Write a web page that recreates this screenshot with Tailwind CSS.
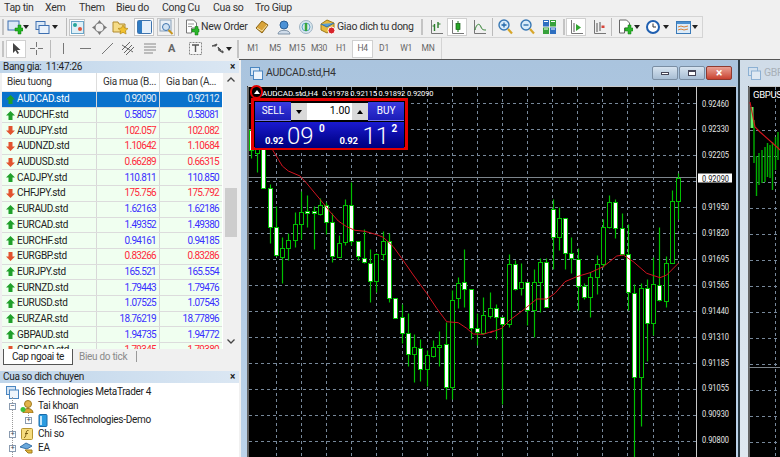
<!DOCTYPE html>
<html lang="vi">
<head>
    <meta charset="UTF-8">
    <title>MetaTrader 4</title>
    <script src="https://cdn.jsdelivr.net/npm/@tailwindcss/browser@4"></script>
</head>
<body class="w-[780px] h-[457px] overflow-hidden bg-[#f0f0f0] text-[#222] text-[10px] tracking-[-0.3px] leading-none font-['Roboto',sans-serif]">

    <!-- Menu -->
    <nav class="h-[16px] flex items-center text-[10.5px] text-[#333]">
        <span class="ml-[4px] w-[41px]">Tap tin</span>
        <span class="w-[34px]">Xem</span>
        <span class="w-[37px]">Them</span>
        <span class="w-[46px]">Bieu do</span>
        <span class="w-[51px]">Cong Cu</span>
        <span class="w-[42px]">Cua so</span>
        <span>Tro Giup</span>
    </nav>

    <!-- Toolbar 1 -->
    <div class="h-[22px] w-[703px] flex items-center border-y border-r border-[#d4d4d4] text-[10.5px] text-[#333]">
        <i class="ml-[2px] w-[2px] h-[16px] bg-[#c4c4c4]"></i>
        <svg class="ml-[3px]" width="16" height="16" viewBox="0 0 16 16"><rect x="1" y="2" width="11" height="9" fill="#dbe9f7" stroke="#3d6fb0"/><path d="M8 9h3V6h3v3h2v3h-2v3h-3v-3H8z" fill="#22b522" stroke="#0b7a0b" stroke-width=".5"/></svg>
        <svg width="6" height="4" viewBox="0 0 6 4"><path d="M0 0h6L3 4z" fill="#222"/></svg>
        <svg class="ml-[6px]" width="15" height="15" viewBox="0 0 15 15"><rect x="1" y="1.500" width="9" height="8" fill="#dbe9f7" stroke="#3d6fb0"/><rect x="4" y="5.500" width="10" height="8" fill="#eaf2fb" stroke="#3d6fb0"/></svg>
        <svg class="ml-[2px]" width="6" height="4" viewBox="0 0 6 4"><path d="M0 0h6L3 4z" fill="#222"/></svg>
        <i class="ml-[8px] w-[1px] h-[18px] bg-[#bbb]"></i>
        <span class="ml-[2px] w-[16px] h-[17px] flex items-center justify-center bg-white border border-[#c6c6c6]"><svg width="13" height="13" viewBox="0 0 13 13"><rect x=".5" y=".5" width="12" height="12" fill="#dff0f7" stroke="#6aa5c9"/><circle cx="4" cy="4" r="2" fill="#26a69a"/><circle cx="9" cy="8" r="2" fill="#e0533d"/></svg></span>
        <svg class="ml-[7px]" width="15" height="15" viewBox="0 0 15 15"><circle cx="7.500" cy="7.500" r="4.500" fill="none" stroke="#777" stroke-width="1.200"/><path d="M7.500 0l2 3h-4zM7.500 15l2-3h-4zM0 7.500l3-2v4zM15 7.500l-3-2v4z" fill="#777"/></svg>
        <svg class="ml-[5px]" width="17" height="16" viewBox="0 0 17 16"><path d="M1 3h5l1 2h6v8H1z" fill="#f5dc88" stroke="#b08a2e"/><path d="M11 6l1.500 3 3.500.5-2.500 2.300.6 3.200-3.100-1.600-3 1.600.6-3.200L6 9.500 9.500 9z" fill="#f2c230" stroke="#a97f12" stroke-width=".6"/></svg>
        <span class="ml-[5px] w-[20px] h-[18px] flex items-center justify-center bg-white border border-[#c6c6c6]"><svg width="15" height="14" viewBox="0 0 15 14"><rect x=".5" y=".5" width="14" height="13" rx="1" fill="#e6f0fa" stroke="#3f74ad"/><rect x="1" y="1" width="4" height="12" fill="#2f7cc4"/></svg></span>
        <span class="ml-[3px] w-[18px] h-[18px] flex items-center justify-center border border-[#c6c6c6]"><svg width="15" height="16" viewBox="0 0 15 16"><rect x="1" y="1" width="11" height="11" fill="#e9f0f7" stroke="#88a0b8"/><circle cx="7" cy="8" r="3.500" fill="#cfe2f3" stroke="#3f74ad"/><path d="M9.500 11l4 4" stroke="#c8961e" stroke-width="2"/></svg></span>
        <i class="ml-[3px] w-[1px] h-[18px] bg-[#bbb]"></i>
        <svg class="ml-[6px]" width="15" height="17" viewBox="0 0 15 17"><path d="M1.500 1h7l3 3v5h-5v5h-5z" fill="#fff" stroke="#777"/><path d="M3 5h6M3 7.500h4" stroke="#999"/><path d="M8 9h3V6.500h3V9h1v3h-1v3h-3v-3H8z" transform="translate(-1 1)" fill="#2cb52c" stroke="#0b7a0b" stroke-width=".5"/></svg>
        <span class="ml-[1px] w-[54px] whitespace-nowrap">New Order</span>
        <svg width="14" height="14" viewBox="0 0 14 14"><path d="M1 8l6-7 6 4-6 8z" fill="#d9a43a" stroke="#8b6414"/><path d="M2 8l5 3 5-6" fill="none" stroke="#f5e2a8"/></svg>
        <svg class="ml-[8px]" width="14" height="15" viewBox="0 0 14 15"><circle cx="7" cy="5" r="4" fill="#4b91d6" stroke="#2a5f97"/><path d="M1 14c0-5 12-5 12 0z" fill="#cfdcea" stroke="#7f93a8"/></svg>
        <svg class="ml-[8px]" width="14" height="14" viewBox="0 0 14 14"><circle cx="7" cy="7" r="6.500" fill="#d9e6ee" stroke="#9fb3c2"/><circle cx="7" cy="7" r="4" fill="none" stroke="#5aa7c9"/><path d="M7 3v8" stroke="#3aa63a" stroke-width="2.500"/></svg>
        <svg class="ml-[7px]" width="16" height="16" viewBox="0 0 16 16"><path d="M1 5l6-4 7 3v6l-7 4-6-3z" fill="#e6b93f" stroke="#9c7a18"/><path d="M1 5l6 3 7-4" fill="#5aa0d8" stroke="#2f6ea6"/><circle cx="11.500" cy="11.500" r="3.500" fill="#d8232a" stroke="#fff"/></svg>
        <span class="ml-[1px] w-[76px] whitespace-nowrap">Giao dich tu dong</span>
        <i class="ml-[8px] w-[2px] h-[16px] bg-[#c4c4c4]"></i>
        <svg class="ml-[7px]" width="13" height="15" viewBox="0 0 13 15"><path d="M1.500 0v13.500H13" fill="none" stroke="#777"/><path d="M4.500 4v7M8 2v6" stroke="#2a7d2a" stroke-width="1.400"/><path d="M2.500 6h2M8 4h2.500" stroke="#2a7d2a"/></svg>
        <span class="ml-[4px] w-[20px] h-[18px] flex items-center justify-center bg-white border border-[#d0d0d0]"><svg width="13" height="15" viewBox="0 0 13 15"><path d="M1.500 0v13.500H13" fill="none" stroke="#777"/><path d="M7 1v11" stroke="#1c7a1c"/><rect x="5" y="3.500" width="4" height="6" fill="#26a626" stroke="#145f14" stroke-width=".7"/></svg></span>
        <svg class="ml-[6px]" width="13" height="15" viewBox="0 0 13 15"><path d="M1.500 0v13.500H13" fill="none" stroke="#777"/><path d="M2 10c2-8 5-6 6-3s3 3 5 3" fill="none" stroke="#2a7d2a"/></svg>
        <i class="ml-[6px] w-[1px] h-[18px] bg-[#bbb]"></i>
        <svg class="ml-[5px]" width="15" height="16" viewBox="0 0 15 16"><circle cx="6" cy="6" r="5" fill="#d7ebf9" stroke="#3878b4" stroke-width="1.400"/><path d="M3.500 6h5M6 3.500v5" stroke="#2167a8" stroke-width="1.300"/><path d="M10 10l4 4.500" stroke="#d7a62a" stroke-width="2.200"/></svg>
        <svg class="ml-[7px]" width="15" height="16" viewBox="0 0 15 16"><circle cx="6" cy="6" r="5" fill="#d7ebf9" stroke="#3878b4" stroke-width="1.400"/><path d="M3.500 6h5" stroke="#2167a8" stroke-width="1.300"/><path d="M10 10l4 4.500" stroke="#d7a62a" stroke-width="2.200"/></svg>
        <svg class="ml-[8px]" width="13" height="14" viewBox="0 0 13 14"><rect width="6" height="6.500" fill="#2e6fc0"/><rect x="7" width="6" height="6.500" fill="#37a13a"/><rect y="7.500" width="6" height="6.500" fill="#37a13a"/><rect x="7" y="7.500" width="6" height="6.500" fill="#2e6fc0"/><path d="M1 1.500h4M8 1.500h4M1 9h4M8 9h4" stroke="#fff"/></svg>
        <i class="ml-[7px] w-[2px] h-[16px] bg-[#c4c4c4]"></i>
        <span class="ml-[1px] w-[20px] h-[18px] flex items-center justify-center bg-white border border-[#d0d0d0]"><svg width="13" height="15" viewBox="0 0 13 15"><path d="M1.500 0v13.500H13" fill="none" stroke="#777"/><path d="M4 3v9" stroke="#555"/><path d="M6 4l5 3.500L6 11z" fill="#2fa52f"/></svg></span>
        <svg class="ml-[7px]" width="13" height="15" viewBox="0 0 13 15"><path d="M1.500 0v13.500H13" fill="none" stroke="#777"/><path d="M4 3v9M7 2v9" stroke="#555"/><path d="M8.500 5.500h3v2.500h-3z" fill="#d7453a"/></svg>
        <i class="ml-[5px] w-[1px] h-[18px] bg-[#bbb]"></i>
        <svg class="ml-[6px]" width="15" height="16" viewBox="0 0 15 16"><path d="M1.500 1h7l3 3v5h-5v5h-5z" fill="#fff" stroke="#666"/><path d="M7 9h3V6h3v3h2v3h-2v3h-3v-3H7z" fill="#2cb52c" stroke="#0b7a0b" stroke-width=".5"/></svg>
        <svg class="ml-[1px]" width="6" height="4" viewBox="0 0 6 4"><path d="M0 0h6L3 4z" fill="#222"/></svg>
        <svg class="ml-[6px]" width="14" height="14" viewBox="0 0 14 14"><circle cx="7" cy="7" r="6" fill="#fff" stroke="#1f5fb0" stroke-width="2"/><path d="M7 3.500V7h3" fill="none" stroke="#333"/></svg>
        <svg class="ml-[3px]" width="6" height="4" viewBox="0 0 6 4"><path d="M0 0h6L3 4z" fill="#222"/></svg>
        <svg class="ml-[7px]" width="15" height="13" viewBox="0 0 15 13"><rect x=".5" y=".5" width="14" height="12" fill="#dcebf8" stroke="#3a7ab8"/><rect x="1" y="1" width="13" height="2" fill="#4b8fcf"/><path d="M2 6l3-1 3 1 4-1M2 9l3-1 3 1 4-1" fill="none" stroke="#d8823a"/></svg>
        <svg class="ml-[1px]" width="6" height="4" viewBox="0 0 6 4"><path d="M0 0h6L3 4z" fill="#222"/></svg>
    </div>

    <!-- Toolbar 2 -->
    <div class="h-[21px] w-[442px] flex items-center border-r border-[#d4d4d4] text-[8.5px] text-[#666]">
        <i class="ml-[2px] w-[2px] h-[16px] bg-[#c4c4c4]"></i>
        <span class="ml-[2px] w-[20px] h-[18px] flex items-center justify-center bg-white border border-[#d0d0d0]"><svg width="10" height="13" viewBox="0 0 10 13"><path d="M2 1v10l2.500-2.500L6.500 12 8 11 6 8h3.500z" fill="#444"/></svg></span>
        <svg class="ml-[4px]" width="13" height="13" viewBox="0 0 13 13"><path d="M6.500 0v5M6.500 8v5M0 6.500h5M8 6.500h5" stroke="#777"/></svg>
        <i class="ml-[7px] w-[1px] h-[18px] bg-[#bbb]"></i>
        <svg class="ml-[12px]" width="1" height="11" viewBox="0 0 1 11"><path d="M.5 0v11" stroke="#777"/></svg>
        <svg class="ml-[16px]" width="11" height="1" viewBox="0 0 11 1"><path d="M0 .5h11" stroke="#777"/></svg>
        <svg class="ml-[11px]" width="11" height="11" viewBox="0 0 11 11"><path d="M0 11L11 0" stroke="#777"/></svg>
        <svg class="ml-[9px]" width="13" height="13" viewBox="0 0 13 13"><path d="M0 8L8 0M2 11l8-8M4 13l8-8M0 3l11 7" stroke="#666"/></svg>
        <svg class="ml-[9px]" width="13" height="12" viewBox="0 0 13 12"><path d="M0 1h12M0 4h12M0 7h12M0 10h9" stroke="#888"/></svg>
        <span class="ml-[11px] w-[10px] text-[11px] font-bold text-[#666]">A</span>
        <svg class="ml-[11px]" width="13" height="13" viewBox="0 0 13 13"><rect x=".5" y=".5" width="12" height="12" fill="#f6f6f6" stroke="#888" stroke-dasharray="2 1"/><path d="M3 3h7M6.500 3v7" stroke="#555" stroke-width="1.400"/></svg>
        <svg class="ml-[10px]" width="12" height="11" viewBox="0 0 12 11"><path d="M0 3h4l1-2zM6 4l3 3-2 1zM8 8h3v2z" fill="#555" stroke="#555"/></svg>
        <svg class="ml-[2px]" width="6" height="4" viewBox="0 0 6 4"><path d="M0 0h6L3 4z" fill="#222"/></svg>
        <i class="ml-[5px] w-[2px] h-[18px] bg-[#c4c4c4]"></i>
        <span class="ml-[3px] w-[22px] text-center">M1</span>
        <span class="w-[22px] text-center">M5</span>
        <span class="w-[22px] text-center">M15</span>
        <span class="w-[22px] text-center">M30</span>
        <span class="w-[22px] text-center">H1</span>
        <span class="w-[21px] h-[18px] flex items-center justify-center bg-white border border-[#d0d0d0]">H4</span>
        <span class="w-[22px] text-center">D1</span>
        <span class="w-[22px] text-center">W1</span>
        <span class="w-[22px] text-center">MN</span>
    </div>

    <div class="h-[398px] flex">
        <!-- Left column -->
        <aside class="w-[239px] shrink-0 pt-[2px]">
            <div class="h-[12px] flex items-center justify-between pl-[3px] pr-[4px] bg-gradient-to-r from-[#bfd5ea] to-[#dbe7f3] text-[#222]">
                <span>Bang gia:&nbsp; 11:47:26</span><span class="font-bold text-[10px]">×</span>
            </div>
            <div class="relative h-[276px] ml-[2px] bg-white overflow-hidden">
                <div class="h-[19px] w-[220px] grid grid-cols-[94px_63px_63px] items-center text-[#333] border-b border-[#e4e4e4]">
                    <span class="pl-[5px]">Bieu tuong</span>
                    <span class="h-full flex items-center pl-[6px] whitespace-nowrap border-l border-[#ddd]">Gia mua (B...</span>
                    <span class="h-full flex items-center pl-[6px] whitespace-nowrap border-l border-[#ddd]">Gia ban (A...</span>
                </div>
                <div id="rows" class="w-[220px]"></div>
                <!-- scrollbar -->
                <div class="absolute top-0 right-0 w-[16px] h-full bg-[#f0f0f0] flex flex-col items-center">
                    <svg class="mt-[4px]" width="8" height="5" viewBox="0 0 8 5"><path d="M.5 4.500L4 1l3.500 3.500" fill="none" stroke="#444" stroke-width="1.300"/></svg>
                    <div class="mt-[106px] w-[12px] h-[49px] bg-[#cdcdcd]"></div>
                    <svg class="mt-[102px]" width="8" height="5" viewBox="0 0 8 5"><path d="M.5.500L4 4 7.500.500" fill="none" stroke="#444" stroke-width="1.300"/></svg>
                </div>
            </div>
            <div class="h-[16px] ml-[3px] flex items-start">
                <span class="h-[16px] w-[70px] flex items-center justify-center whitespace-nowrap bg-white border-x border-b border-[#555] text-[#222]">Cap ngoai te</span>
                <span class="ml-[6px] mt-[3px] text-[#8a8a8a] w-[57px] whitespace-nowrap">Bieu do tick</span>
                <i class="mt-[2px] w-px h-[11px] bg-[#999]"></i>
            </div>
            <div class="mt-[6px] h-[12px] flex items-center justify-between pl-[3px] pr-[4px] bg-gradient-to-r from-[#bfd5ea] to-[#dbe7f3] text-[#222]">
                <span>Cua so dich chuyen</span><span class="font-bold text-[10px]">×</span>
            </div>
            <!-- Navigator tree -->
            <div class="relative bg-white h-[80px] pt-[2px] text-[#222] overflow-hidden">
                <div class="absolute left-[12px] top-[14px] h-[70px] border-l border-dotted border-[#999]"></div>
                <div class="absolute left-[28px] top-[28px] h-[9px] border-l border-dotted border-[#999]"></div>
                <div class="h-[14px] flex items-center pl-[6px]">
                    <svg width="13" height="13" viewBox="0 0 13 13"><rect x=".5" y=".5" width="9" height="8" fill="#d5e5f5" stroke="#4b86c0"/><rect x="3.500" y="4" width="9" height="8.500" fill="#eef5fc" stroke="#4b86c0"/></svg>
                    <span class="ml-[3px]">IS6 Technologies MetaTrader 4</span>
                </div>
                <div class="relative h-[14px] flex items-center pl-[9px]">
                    <span class="w-[7px] h-[7px] flex items-center justify-center bg-white border border-[#8a9bb0] text-[7px] text-[#345]">–</span>
                    <svg class="ml-[4px]" width="15" height="13" viewBox="0 0 15 13"><circle cx="8" cy="4" r="3.500" fill="#e3b34a" stroke="#a07a1e"/><path d="M3 13c0-6 10-6 10 0z" fill="#d9a437" stroke="#9a7418"/><circle cx="3" cy="9.500" r="2.500" fill="#3bbf3b"/></svg>
                    <span class="ml-[3px]">Tai khoan</span>
                </div>
                <div class="relative h-[14px] flex items-center pl-[25px]">
                    <span class="w-[7px] h-[7px] flex items-center justify-center bg-white border border-[#8a9bb0] text-[7px] text-[#345]">+</span>
                    <svg class="ml-[6px]" width="10" height="13" viewBox="0 0 10 13"><rect x="1" y=".5" width="8" height="12" rx="1" fill="#2b9be0" stroke="#1b6aa8"/><rect x="2" y="2" width="2" height="9" fill="#bfe4fa"/></svg>
                    <span class="ml-[6px]">IS6Technologies-Demo</span>
                </div>
                <div class="relative h-[14px] flex items-center pl-[9px]">
                    <span class="w-[7px] h-[7px] flex items-center justify-center bg-white border border-[#8a9bb0] text-[7px] text-[#345]">+</span>
                    <svg class="ml-[5px]" width="12" height="12" viewBox="0 0 12 12"><rect x=".5" y=".5" width="11" height="11" rx="1" fill="#f6dc7e" stroke="#b69530"/><path d="M7.500 2.500c-2-.5-2 1-2.500 3.500S4.500 9.500 3 9.500M4 5.500h3" fill="none" stroke="#7a5c10"/></svg>
                    <span class="ml-[5px]">Chi so</span>
                </div>
                <div class="relative h-[14px] flex items-center pl-[9px]">
                    <span class="w-[7px] h-[7px] flex items-center justify-center bg-white border border-[#8a9bb0] text-[7px] text-[#345]">+</span>
                    <svg class="ml-[4px]" width="13" height="12" viewBox="0 0 13 12"><path d="M0 5l6-4 6 3-5 3z" fill="#6aa8dc" stroke="#3a72a8"/><path d="M5 8h7v3H8z" fill="#e4b73a" stroke="#a07a1e"/></svg>
                    <span class="ml-[5px]">EA</span>
                </div>
            </div>
        </aside>

        <!-- Chart windows -->
        <main class="relative flex-1 flex overflow-hidden border-t border-[#555]">
            <section class="relative w-[499px] ml-[2px] shrink-0 bg-gradient-to-b from-[#aac4de] to-[#bcd3ea] border-r-[2px] border-[#2a3a44] flex flex-col">
                <header class="h-[26px] flex items-center pl-[9px]">
                    <svg width="13" height="13" viewBox="0 0 13 13"><rect x=".5" y=".5" width="9" height="8" fill="#d5e5f5" stroke="#4b86c0"/><rect x="3.500" y="4" width="9" height="8.500" fill="#eef5fc" stroke="#4b86c0"/></svg>
                    <span class="ml-[3px] text-[10.5px] text-[#333]">AUDCAD.std,H4</span>
                    <div class="ml-auto mr-[6px] flex gap-px">
                        <span class="w-[26px] h-[14px] flex items-center justify-center rounded-[2px] border border-[#7a8ea3] bg-gradient-to-b from-[#d7e4f0] to-[#a8bed4]"><i class="w-[8px] h-[3px] bg-white border border-[#445]"></i></span>
                        <span class="w-[26px] h-[14px] flex items-center justify-center rounded-[2px] border border-[#7a8ea3] bg-gradient-to-b from-[#d7e4f0] to-[#a8bed4]"><i class="w-[8px] h-[6px] bg-white border-x border-b-[1px] border-t-[2px] border-[#445]"></i></span>
                        <span class="w-[26px] h-[14px] flex items-center justify-center rounded-[2px] border border-[#8e3a30] bg-gradient-to-b from-[#e8a095] to-[#c8402f] text-white font-bold text-[12px]">×</span>
                    </div>
                </header>
                <div class="relative ml-[6px] mr-[2px] flex-1 bg-black tracking-normal">
                    <svg id="chart" class="block" width="489" height="371" viewBox="247 86 489 371"></svg>

                    <!-- One click panel -->
                    <button class="absolute left-[3px] top-[-1px] w-[13px] h-[14px] rounded-full border-2 border-[#e00000] bg-black flex items-center justify-center"><i class="border-x-[3px] border-b-[4px] border-x-transparent border-b-white"></i></button>
                    <div class="absolute left-[15px] top-[4px] flex text-[7.5px] tracking-[-0.1px] text-white whitespace-nowrap">
                        <span class="w-[60px] text-[8px] tracking-normal">AUDCAD.std,H4</span>
                        <span class="w-[28.300px]">0.91978</span>
                        <span class="w-[28.300px]">0.92115</span>
                        <span class="w-[28.300px]">0.91892</span>
                        <span>0.92090</span>
                    </div>
                    <div class="absolute left-[4px] top-[12px] w-[157px] h-[52px] border-[3px] border-[#e40000] bg-black p-[1px]">
                        <div class="flex h-[19px] justify-between">
                            <span class="w-[36px] flex items-center justify-center bg-gradient-to-b from-[#3a3ae0] to-[#1c1cb8] text-white text-[10px] border-b border-[#7777e8]">SELL</span>
                            <div class="w-[78px] h-[17px] mt-px flex bg-white">
                                <span class="w-[16px] flex items-center justify-center bg-[#d9d9d9]"><i class="border-x-[3px] border-t-[4px] border-x-transparent border-t-black"></i></span>
                                <span class="flex-1 flex items-center justify-end pr-[2px] text-[10.5px] text-black">1.00</span>
                                <span class="w-[16px] flex items-center justify-center bg-[#d9d9d9]"><i class="border-x-[3px] border-b-[4px] border-x-transparent border-b-black"></i></span>
                            </div>
                            <span class="w-[36px] flex items-center justify-center bg-gradient-to-b from-[#3a3ae0] to-[#1c1cb8] text-white text-[10px] border-b border-[#7777e8]">BUY</span>
                        </div>
                        <div class="mt-px flex h-[26px] justify-between text-white">
                            <div class="relative w-[75px] bg-gradient-to-b from-[#1a1ad0] to-[#00007e]">
                                <span class="absolute left-[10px] bottom-[3px] text-[9.5px] tracking-[-0.2px] font-bold">0.92</span>
                                <span class="absolute left-[32px] top-[3px] text-[24px] font-light leading-[22px]">09</span>
                                <span class="absolute left-[64px] top-[2px] text-[10px] font-bold">0</span>
                            </div>
                            <div class="relative w-[75px] bg-gradient-to-b from-[#1a1ad0] to-[#00007e]">
                                <span class="absolute left-[10px] bottom-[3px] text-[9.5px] tracking-[-0.2px] font-bold">0.92</span>
                                <span class="absolute left-[33px] top-[3px] text-[24px] font-light leading-[22px]">11</span>
                                <span class="absolute left-[62px] top-[2px] text-[10px] font-bold">2</span>
                            </div>
                        </div>
                    </div>
                </div>
            </section>

            <section class="w-[40px] shrink-0 bg-gradient-to-b from-[#d0dce8] to-[#dfe8f0] flex flex-col">
                <header class="h-[26px] flex items-center pl-[8px] text-[10.5px] text-[#a8b0b8] whitespace-nowrap overflow-hidden">
                    <svg class="shrink-0 opacity-50" width="13" height="13" viewBox="0 0 13 13"><rect x=".5" y=".5" width="9" height="8" fill="#d5e5f5" stroke="#4b86c0"/><rect x="3.500" y="4" width="9" height="8.500" fill="#eef5fc" stroke="#4b86c0"/></svg>
                    <span class="ml-[3px]">GBPUSD</span>
                </header>
                <div class="relative ml-[8px] flex-1 bg-black overflow-hidden">
                    <svg id="chart2" class="block" width="32" height="371" viewBox="748 86 32 371"></svg>
                    <span class="absolute left-[5px] top-[4px] text-[9.500px] text-white whitespace-nowrap">GBPUSD</span>
                </div>
            </section>
        </main>
    </div>

    <script>
        // Market watch rows: symbol, bid, ask, direction
        const quotes = [
            ['AUDCAD.std', '0.92090', '0.92112', 'up', 'sel'],
            ['AUDCHF.std', '0.58057', '0.58081', 'up'],
            ['AUDJPY.std', '102.057', '102.082', 'down'],
            ['AUDNZD.std', '1.10642', '1.10684', 'down'],
            ['AUDUSD.std', '0.66289', '0.66315', 'down'],
            ['CADJPY.std', '110.811', '110.850', 'up'],
            ['CHFJPY.std', '175.756', '175.792', 'down'],
            ['EURAUD.std', '1.62163', '1.62186', 'up'],
            ['EURCAD.std', '1.49352', '1.49380', 'up'],
            ['EURCHF.std', '0.94161', '0.94185', 'up'],
            ['EURGBP.std', '0.83266', '0.83286', 'down'],
            ['EURJPY.std', '165.521', '165.554', 'up'],
            ['EURNZD.std', '1.79443', '1.79476', 'up'],
            ['EURUSD.std', '1.07525', '1.07543', 'up'],
            ['EURZAR.std', '18.76219', '18.77896', 'up'],
            ['GBPAUD.std', '1.94735', '1.94772', 'up'],
            ['GBPCAD.std', '1.79345', '1.79380', 'down']
        ];
        const arrow = (dir) => dir === 'up'
            ? '<svg width="9" height="9" viewBox="0 0 9 9"><path d="M4.500 0L9 4.500H6.500V9h-4V4.500H0z" fill="#1fa02a"/></svg>'
            : '<svg width="9" height="9" viewBox="0 0 9 9"><path d="M4.500 9L9 4.500H6.500V0h-4v4.500H0z" fill="#e2532f"/></svg>';

        document.getElementById('rows').innerHTML = quotes.map(q => {
            const sel = q[4] === 'sel';
            const rowCls = sel ? 'bg-[#0a72cc] text-white' : 'bg-[#f0fff0] text-[#222]';
            const priceCls = sel ? 'text-[#e4eef8]' : (q[3] === 'up' ? 'text-[#3a30ff]' : 'text-[#ff2a3c]');
            return `<div class="h-[15.7px] grid grid-cols-[94px_63px_63px] items-center border-b border-[#dcdcdc] ${rowCls}">
                <span class="flex items-center gap-[2px] pl-[4px] text-[10px]">${arrow(q[3])}${q[0]}</span>
                <span class="h-full flex items-center justify-end pr-[3px] border-l border-[#d8d8d8] text-[10px] tracking-[-0.7px] ${priceCls}">${q[1]}</span>
                <span class="h-full flex items-center justify-end pr-[3px] border-l border-[#d8d8d8] text-[10px] tracking-[-0.7px] ${priceCls}">${q[2]}</span>
            </div>`;
        }).join('');

        // Candles measured from the picture: wick top, wick bottom, body top, body bottom, white body
        const candles = [
            [-60,24,-60,0,1],[-60,66,-60,10,0],[-60,115,-60,115,1],
            [103,280,114,232,1],[168,318,232,316,1],[260,398,293,320,0],[248,330,269,294,0],[187,292,222,269,0],
            [123,268,187,223,0],[135,230,184,188,1],[168,298,184,189,1],[143,195,166,191,0],[155,252,166,215,1],
            [190,335,215,319,1],[255,322,279,322,0],[148,285,166,277,0],[95,285,166,274,1],[274,330,274,319,1],
            [238,340,323,335,1],[298,456,338,394,1],[308,425,312,394,0],[243,330,272,313,0],[250,456,272,443,1],
            [444,505,444,503,1],[462,580,502,548,1],[488,647,550,611,1],[552,695,590,611,0],[566,692,595,656,1],
            [600,707,616,658,0],[570,622,590,617,0],[542,647,584,590,0],[517,747,583,710,1],[420,748,449,710,0],
            [380,475,398,445,0],[297,470,397,417,1],[418,567,418,533,1],[490,584,533,545,1],[440,552,496,549,0],
            [427,505,473,497,0],[462,566,475,500,1],
            [500,762,500,521,1],[313,532,343,523,0],[330,420,343,416,1],[340,435,397,415,0],[397,525,397,481,1],
            [358,562,395,481,0],[325,485,335,395,0],[325,472,335,470,1],[148,358,178,260,1],[170,300,205,262,0],
            [205,358,205,310,1],[262,370,310,325,1],[293,480,326,408,1],[398,447,408,440,1],[365,500,380,440,0],
            [316,432,343,380,0],[207,350,230,343,0],[135,235,157,230,0],[148,265,156,234,1],[190,315,234,312,1],
            [222,480,312,427,1],[403,930,428,680,1],[400,828,413,680,0],[388,632,413,520,1],[322,555,403,520,0],
            [232,452,405,451,1],[318,470,338,452,0],[120,340,152,340,0],[68,208,84,152,0]
        ];
        // Moving average, two measured crops
        const maLeft = [[68,0],[85,28],[97,48],[115,63],[150,78],[170,100],[210,148],[240,185],[265,213],[290,230],[315,241],[345,244],[380,254],[400,262],[430,290],[455,325],[490,375],[530,430],[560,475],[590,515],[625,518],[650,535],[670,552],[700,553],[730,543]];
        const maRight = [[0,548],[35,535],[60,510],[100,480],[140,447],[170,447],[195,430],[225,395],[260,380],[300,368],[340,350],[380,318],[400,315],[430,335],[470,370],[510,383],[530,375],[565,340]];
        const maPts = [[272,137]].concat(maLeft.map(p => [250 + p[0] / 3, 150 + p[1] / 3]), maRight.map(p => [490 + p[0] / 3, 150 + p[1] / 3]));

        const Y = (z) => Math.round(150 + z / 3) + .5;
        const gridColor = '#77889a';
        let s = '';
        // frame
        s += '<path d="M248 457V86.500H736M696.500 86.500V457" fill="none" stroke="#c8c8c8"/>';
        // grid
        for (let y = 103; y < 457; y += 26) s += `<path d="M249 ${y + .5}H696" stroke="${gridColor}" stroke-dasharray="3 3"/>`;
        for (let x = 276; x < 696; x += 25.1) s += `<path d="M${Math.round(x) + .5} 87V457" stroke="${gridColor}" stroke-dasharray="3 3"/>`;
        s += '<path d="M248 177.500H696" stroke="#7d858c"/>';
        // candles
        candles.forEach((c, i) => {
            const x = Math.round(250.7 + i * 6.288) + .5;
            s += `<path d="M${x} ${Y(c[0])}V${Y(c[1])}" stroke="#00c000" stroke-width="1.200"/>`;
            const top = Y(c[2]), bot = Y(c[3]);
            s += `<rect x="${x - 2}" y="${top}" width="4" height="${Math.max(bot - top, 1)}" fill="${c[4] ? '#fff' : '#000'}" stroke="#00c000"/>`;
        });
        s += `<polyline points="${maPts.map(p => p[0].toFixed(1) + ',' + p[1].toFixed(1)).join(' ')}" fill="none" stroke="#d01420"/>`;
        // price axis
        const labels = ['0.92460','0.92330','0.92205',null,'0.91950','0.91820','0.91695','0.91565','0.91440','0.91310','0.91185','0.91055','0.90930','0.90800'];
        labels.forEach((t, i) => {
            if (t) s += `<text x="702" y="${106.500 + i * 25.9}" fill="#e8e8e8" font-size="9" textLength="27" lengthAdjust="spacingAndGlyphs" font-family="Roboto">${t}</text>`;
        });
        s += '<rect x="698" y="173.500" width="34" height="9" fill="#fff"/><text x="702" y="181.500" fill="#111" font-size="9" textLength="27" lengthAdjust="spacingAndGlyphs" font-family="Roboto">0.92090</text>';
        document.getElementById('chart').innerHTML = s;

        // Second window, only its left edge shows
        let g = '<path d="M749 457V86.500H780" fill="none" stroke="#c8c8c8"/>';
        for (let y = 130; y < 457; y += 26) g += `<path d="M750 ${y + .5}H780" stroke="${gridColor}" stroke-dasharray="3 3"/>`;
        g += `<path d="M775.500 87V457" stroke="${gridColor}" stroke-dasharray="3 3"/>`;
        g += '<path d="M749 367.500H780" stroke="#7d858c"/>';
        g += '<rect x="750.500" y="107" width="3" height="21" fill="#66ee66"/>';
        [[754,120,163],[756.500,156,196],[759,153,185],[762,150,183],[765,147,182],[767.500,143,177],[770,145,178],[772.500,142,190],[775.500,137,170],[778,132,160]].forEach(w => {
            g += `<path d="M${w[0]} ${w[1]}V${w[2]}" stroke="#00b000" stroke-width="1.400"/>`;
        });
        g += '<polyline points="750,102 755,127 760,132 778,148 780,150" fill="none" stroke="#d0141e" stroke-width="1.200"/>';
        document.getElementById('chart2').innerHTML = g;
    </script>
</body>
</html>
